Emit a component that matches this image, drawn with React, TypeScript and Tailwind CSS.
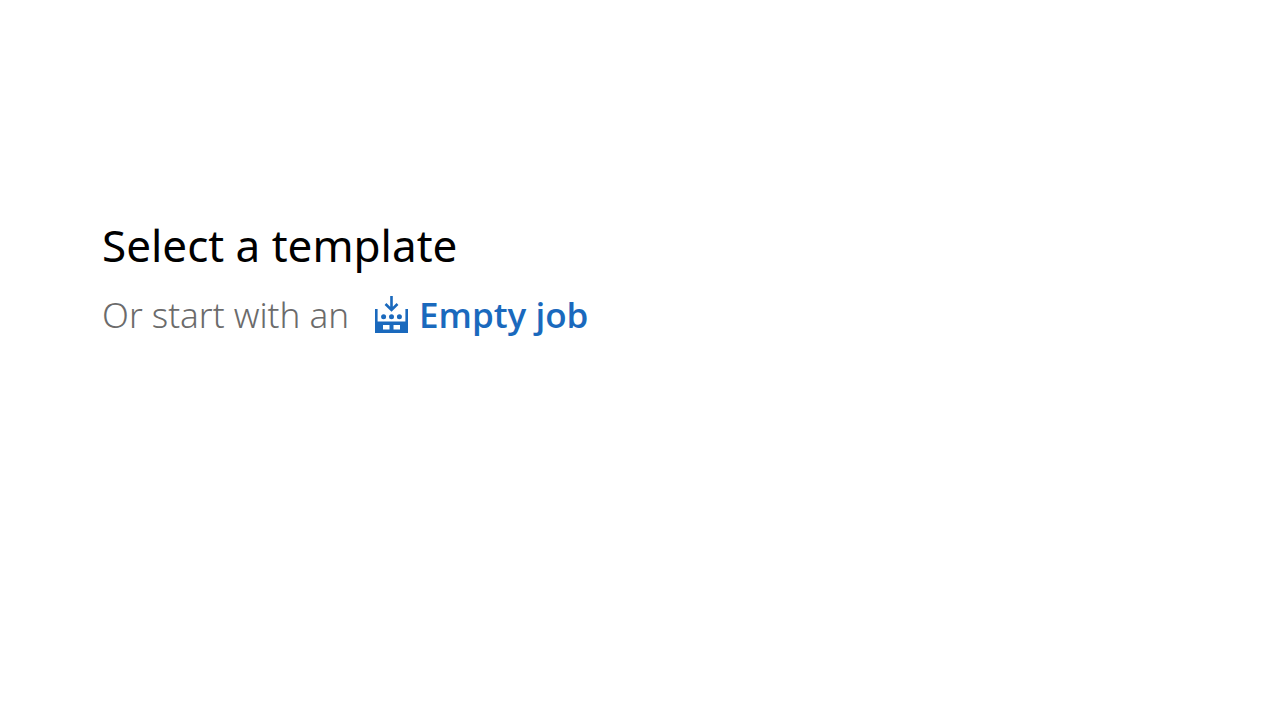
function EmptyJobIcon() {
  return (
    <svg className="h-[38px] w-[34px]" viewBox="0 0 34 38" fill="currentColor" aria-hidden="true">
      {/* Arrow */}
      <path d="M16.5 0v13M10.5 8l6 6 6-6" fill="none" stroke="currentColor" strokeWidth="2.6" />
      {/* Tray with two openings */}
      <path
        fillRule="evenodd"
        d="M0 13h2.6v12.5h27.8V13H33v24H0V13zM8 29h6.5v4.5H8V29zM18.5 29H25v4.5h-6.5V29z"
      />
      {/* Items */}
      <circle cx="8.6" cy="20.7" r="2.5" />
      <circle cx="16.5" cy="20.7" r="2.5" />
      <circle cx="24.4" cy="20.7" r="2.5" />
    </svg>
  );
}

export default function App() {
  return (
    <main className="min-h-screen bg-white px-[102px] pt-[215px] font-['Noto_Sans',sans-serif]">
      <h1 className="text-[44px] leading-[60px] text-black">Select a template</h1>

      <div className="mt-4 flex flex-wrap items-center text-[35px] leading-[48px]">
        <p className="font-light text-[#6b6b6b]">Or start with an</p>
        <a
          href="#"
          className="ml-[26px] flex items-center gap-2.5 font-['Open_Sans',sans-serif] font-semibold text-[#1a69bd]"
        >
          <EmptyJobIcon />
          Empty job
        </a>
      </div>
    </main>
  );
}
